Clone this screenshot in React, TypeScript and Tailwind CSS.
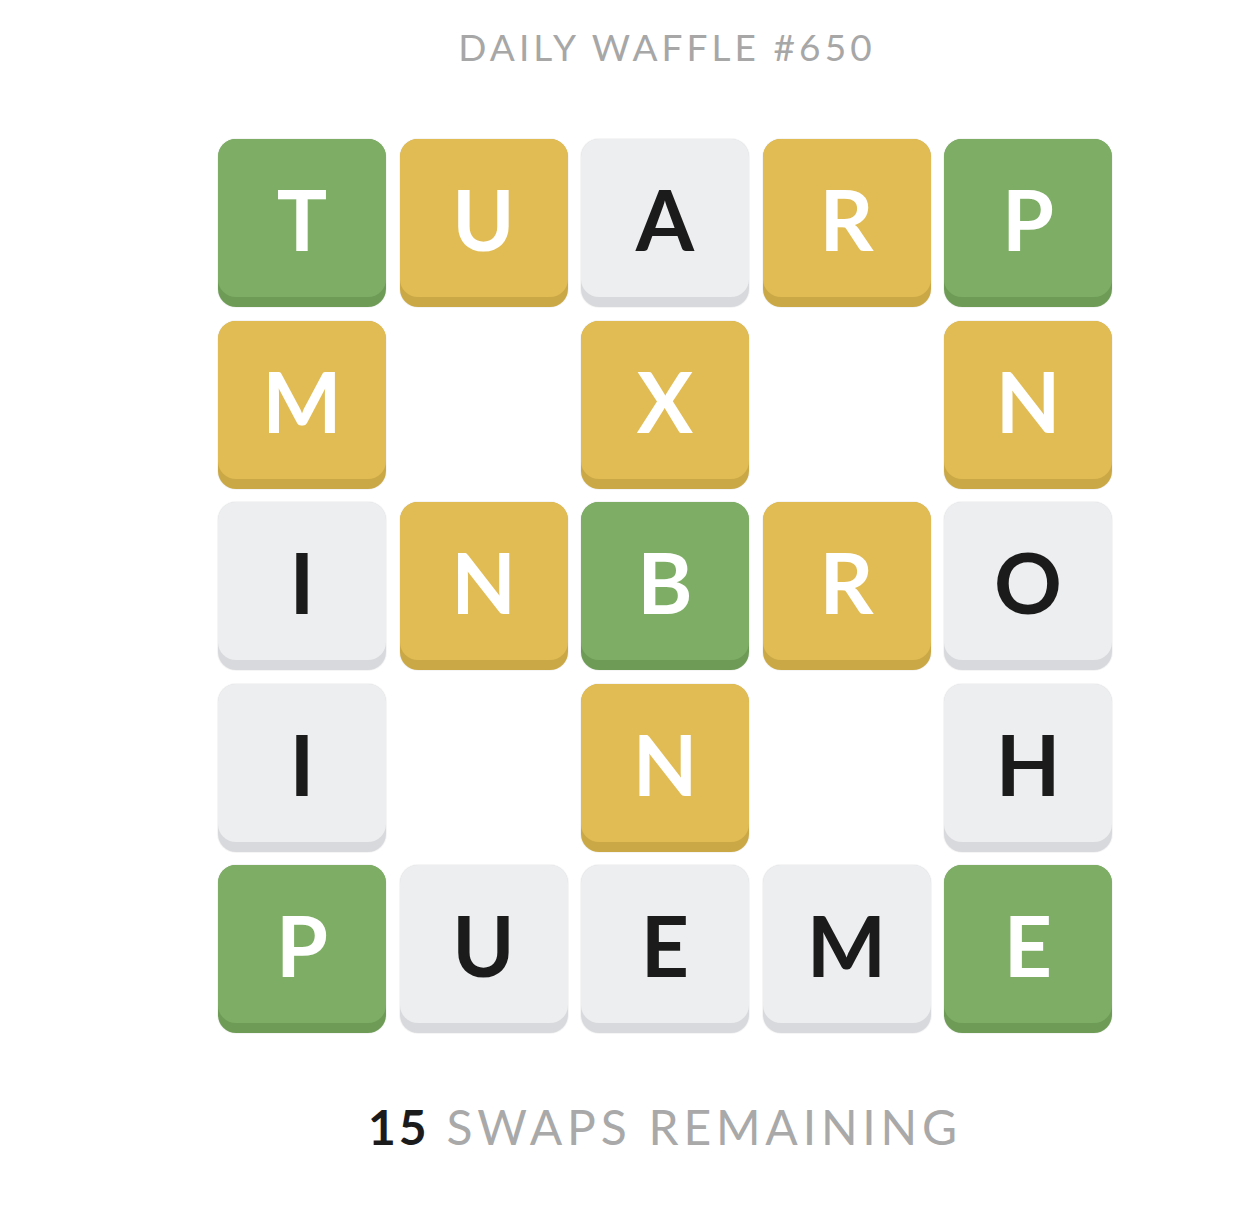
type Tone = 'green' | 'yellow' | 'grey' | null;

const board: [string, Tone][][] = [
  [['T', 'green'], ['U', 'yellow'], ['A', 'grey'], ['R', 'yellow'], ['P', 'green']],
  [['M', 'yellow'], ['', null], ['X', 'yellow'], ['', null], ['N', 'yellow']],
  [['I', 'grey'], ['N', 'yellow'], ['B', 'green'], ['R', 'yellow'], ['O', 'grey']],
  [['I', 'grey'], ['', null], ['N', 'yellow'], ['', null], ['H', 'grey']],
  [['P', 'green'], ['U', 'grey'], ['E', 'grey'], ['M', 'grey'], ['E', 'green']],
];

const tones = {
  green: { base: 'bg-[#6e9c57]', face: 'bg-[#7eae66]', text: 'text-white' },
  yellow: { base: 'bg-[#caa845]', face: 'bg-[#e1bc54]', text: 'text-white' },
  grey: { base: 'bg-[#d8d9dc]', face: 'bg-[#edeef0]', text: 'text-[#1b1b1b]' },
};

function Tile({ letter, tone }: { letter: string; tone: Tone }) {
  if (!tone) return <div className="h-[168px] w-[168px]" />;
  const t = tones[tone];
  return (
    <div className={`h-[168px] w-[168px] rounded-[18px] ${t.base} shadow-[0_0_0_1px_rgba(0,0,0,0.04)]`}>
      <div
        className={`flex h-[158px] w-full items-center justify-center rounded-[18px] ${t.face} ${t.text} pt-[2px] text-[84px] font-bold leading-none`}
      >
        {letter}
      </div>
    </div>
  );
}

export default function App() {
  return (
    <div className="flex min-h-[1212px] w-full flex-col items-center bg-white pl-[76px] font-['Lato','Noto_Sans',sans-serif]">
      <h1 className="mt-[25px] pl-[4px] text-[37px] font-normal leading-[44px] tracking-[0.11em] text-[#a7a7a7]">
        DAILY WAFFLE #650
      </h1>
      <div className="mt-[70px] grid grid-cols-[repeat(5,168px)] gap-[13.5px]">
        {board.flatMap((row, r) =>
          row.map(([letter, tone], c) => <Tile key={`${r}-${c}`} letter={letter} tone={tone} />)
        )}
      </div>
      <p className="mt-[66px] text-[48px] leading-[56px] tracking-[0.1em] text-[#a9a9a9]">
        <span className="font-bold tracking-[0.06em] text-[#1b1b1b]">15</span> SWAPS REMAINING
      </p>
    </div>
  );
}
